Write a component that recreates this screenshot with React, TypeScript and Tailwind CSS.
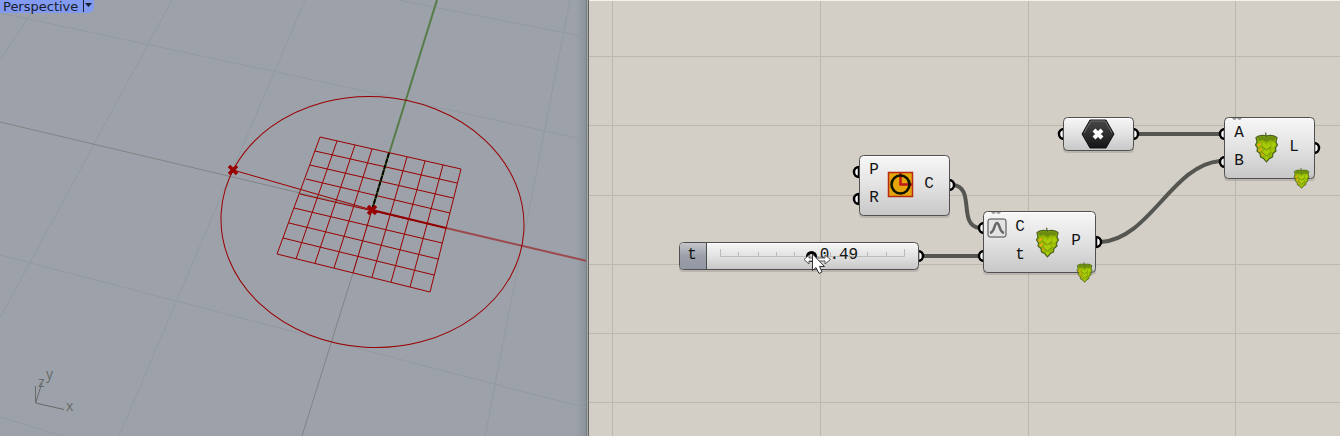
import { useState } from "react";
import type { ReactNode } from "react";

type Pt = [number, number];

const topEdge: Pt[] = [[320, 137], [337, 141], [355, 145], [372, 149], [389, 153], [407, 157], [425, 161], [443, 165], [461, 169]];
const bottomEdge: Pt[] = [[277, 254], [296, 259], [315, 263], [334, 268], [353, 273], [372, 277], [391, 282], [410, 287], [430, 292]];
const leftEdge: Pt[] = [[320, 137], [315, 151], [310, 165], [306, 179], [300, 194], [294, 208], [289, 223], [283, 238], [277, 254]];
const rightEdge: Pt[] = [[461, 169], [457, 183], [453, 198], [450, 213], [446, 228], [442, 243], [438, 259], [434, 275], [430, 292]];

const worldLines = [
  [0, 13, 300, 77], [300, 77, 586, 140], [0, 60, 40, 0], [172, 0, 0, 318], [305, 0, 119, 436],
  [398, 0, 586, 37], [570, 0, 485, 436], [0, 255, 586, 408], [0, 417, 63, 436],
];

function Cross({ x, y }: { x: number; y: number }) {
  return <path d={`M${x - 4} ${y - 4}l8 8M${x + 4} ${y - 4}l-8 8`} stroke="#990000" strokeWidth="3.5" />;
}

function Viewport() {
  return (
    <section aria-label="Perspective viewport" className="relative w-[589px] shrink-0 overflow-hidden bg-[#9da1aa]">
      <svg className="block" width="589" height="436" viewBox="0 0 589 436" fill="none">
        <defs>
          <linearGradient id="edge">
            <stop offset="0" stopColor="#8a929a" stopOpacity="0" />
            <stop offset="1" stopColor="#87919a" />
          </linearGradient>
        </defs>
        <rect x="576" width="11" height="436" fill="url(#edge)" />
        {worldLines.map(([a, b, c, d]) => (
          <line key={`${a}-${b}-${c}`} x1={a} y1={b} x2={c} y2={d} stroke="#939aa1" />
        ))}
        <path d="M0 122L372 210L353 273L302 436" stroke="#7f8584" />
        <path d="M437 0L389 154" stroke="#567c48" strokeWidth="2" />
        <path d="M446 228L587 261" stroke="#9b4a4d" strokeWidth="2" />
        <g stroke="#990000">
          {topEdge.map(([x, y], i) => (
            <line key={`v${i}`} x1={x} y1={y} x2={bottomEdge[i][0]} y2={bottomEdge[i][1]} />
          ))}
          {leftEdge.map(([x, y], i) => (
            <line key={`h${i}`} x1={x} y1={y} x2={rightEdge[i][0]} y2={rightEdge[i][1]} />
          ))}
          <ellipse cx="372.5" cy="222" rx="151.6" ry="125.4" transform="rotate(3.5 372.5 222)" />
          <path d="M233 170L372 210" />
        </g>
        <path d="M372 210L446 228" stroke="#900000" strokeWidth="2" />
        <path d="M389 153L372 210" stroke="#365a0f" strokeWidth="2" />
        <path d="M389 153L372 210" stroke="#000" strokeWidth="1.8" strokeDasharray="5 1" />
        <Cross x={233} y={170} />
        <Cross x={372} y={210} />
        <path d="M35.5 386V403L64 409.500M35.5 403L42 383" stroke="#666b69" />
        <g fill="#666b69" fontFamily="Open Sans, sans-serif" fontSize="14">
          <text x="38" y="387">z</text>
          <text x="46" y="379">y</text>
          <text x="66" y="411">x</text>
        </g>
        <rect x="586" width="1" height="436" fill="#777f82" />
        <rect x="587" width="1" height="436" fill="#a9aaa6" />
        <rect x="588" width="1" height="436" fill="#62635e" />
      </svg>
      <button className="absolute left-0 top-0 flex h-[13px] items-center rounded-br-md bg-[#829bf0] pl-[3px] pr-0.5 text-[#17202f]">
        <span className="w-20 whitespace-nowrap text-left font-['DejaVu_Sans',sans-serif] text-[13px] leading-[9px]">Perspective</span>
        <svg width="9" height="13" viewBox="0 0 9 13"><path d="M.5 0V12" stroke="#17202f" /><path d="M2 3H9L5.500 7Z" fill="#17202f" /></svg>
      </button>
    </section>
  );
}

function Hop({ x, y, size }: { x: number; y: number; size: number }) {
  return (
    <svg x={x} y={y} width={size * 0.78} height={size} viewBox="0 0 25 32">
      <path d="M11.500 1.500L12.500 6M12.500 5C9 4 5 4.500 2 6.500L3 11L1.500 14L3.500 17L3 20L6 22.500L6.500 26L9.500 27.500L12.500 31L15.500 27.500L18.500 26L19 22.500L22 20L21.500 17L23.500 14L22 11L23 6.500C20 4.500 16 4 12.500 5Z" fill="#92b600" stroke="#4b6120" strokeWidth="1.200" strokeLinejoin="round" />
      <path d="M3 7C6 5 10 5 12.500 6C15 5 19 5 22 7L20 10L16.500 9L12.500 11L8.500 9L5 10Z" fill="#6c8d12" />
      <path d="M9 11L12.500 14L16 11L16.500 16L12.500 19L8.500 16ZM17 12L20 11L22 14L18 18ZM9 20L12.500 17.500L16.500 20L15 24L12.500 26L10 24ZM17 19L20.500 18L18 22ZM10.500 27L12.500 25.500L14.500 27L12.500 29.500Z" fill="#a8cb0a" />
      <path d="M3 14L7 11.500L7.500 13.500L4 16ZM4 19.500L7.500 16.500L8 18.500L5.500 21ZM7 23L9.500 21L10 23L8.500 25Z" fill="#eaa81c" />
      <path d="M12.500 6V11M8 15.500L12.500 19L17 15.500M7.500 21L12.500 25L17.500 21" fill="none" stroke="#6e900c" />
    </svg>
  );
}

function Port({ x, y, out = false }: { x: number; y: number; out?: boolean }) {
  return <path d={out ? `M${x} ${y - 5}a5 5 0 0 1 0 10z` : `M${x} ${y - 5}a5 5 0 0 0 0 10z`} fill="#fff" stroke="#000" strokeWidth="2.500" />;
}

function Body({ x, y, w, h }: { x: number; y: number; w: number; h: number }) {
  return (
    <g>
      <rect x={x} y={y + 2} width={w} height={h} rx="4" fill="#000" opacity=".12" />
      <rect x={x + 0.5} y={y + 0.5} width={w - 1} height={h - 1} rx="4" fill="url(#node)" stroke="#505050" />
      <path d={`M${x + 4} ${y + 1.5}H${x + w - 4}`} stroke="#fff" />
    </g>
  );
}

function Label({ x, y, children }: { x: number; y: number; children: ReactNode }) {
  return <text x={x} y={y} textAnchor="middle">{children}</text>;
}

function Canvas() {
  const [value, setValue] = useState(0.49);
  return (
    <main className="relative min-w-0 flex-1 overflow-hidden bg-[#d3cec6]">
      <svg className="block" width="751" height="436" viewBox="589 0 751 436" fill="none">
        <defs>
          <linearGradient id="node" x2="0" y2="1">
            <stop offset="0" stopColor="#f7f7f7" />
            <stop offset=".5" stopColor="#e2e2e2" />
            <stop offset="1" stopColor="#c7c7c7" />
          </linearGradient>
          <linearGradient id="name" x2="0" y2="1">
            <stop offset="0" stopColor="#c5c6cb" />
            <stop offset=".5" stopColor="#9b9fa9" />
            <stop offset="1" stopColor="#9397a3" />
          </linearGradient>
          <linearGradient id="hex" x2="0" y2="1">
            <stop offset="0" stopColor="#484848" />
            <stop offset="1" stopColor="#151515" />
          </linearGradient>
        </defs>
        <path d="M589 56.500H1340M589 125.500H1340M589 195.500H1340M589 264.500H1340M589 333.500H1340M589 402.500H1340M612.500 0V436M820.500 0V436M1028.500 0V436M1235.500 0V436" stroke="#bbb8b0" />
        <path d="M589 .5H1340" stroke="#f2f1ee" />
        <g stroke="#555651" strokeWidth="4">
          <path d="M1138 134H1220M923 256H979M953 185C976 187 957 226 980 228M1101 242C1150 239 1172 165 1220 161" />
        </g>
        <Port x={859} y={172} /><Port x={859} y={199} /><Port x={949} y={185} out />
        <Port x={984} y={228} /><Port x={984} y={256} /><Port x={1096} y={242} out />
        <Port x={1064} y={134} /><Port x={1133} y={134} out />
        <Port x={1225} y={134} /><Port x={1225} y={162} /><Port x={1314} y={148} out />
        <Port x={918} y={256} out />
        <Body x={859} y={155} w={91} h={61} />
        <Body x={983} y={211} w={113} h={62} />
        <Body x={1063} y={117} w={71} h={34} />
        <Body x={1224} y={117} w={91} h={62} />
        <Body x={679} y={242} w={240} h={28} />
        <path d="M707 243H683Q680 243 680 246V266Q680 269 683 269H707Z" fill="url(#name)" />
        <path d="M706.500 243V269" stroke="#4d4f4d" />
        <path d="M720.500 249V256.500H904.500V249M738.500 252V256M758.500 252V256M776.500 252V256M794.500 252V256M830.500 252V256M849.500 252V256M867.500 252V256M886.500 252V256" stroke="#bcbcbc" />
        <g fill="#151515" fontFamily="Liberation Mono, monospace" fontSize="16">
          <Label x={874} y={174}>P</Label><Label x={874} y={202}>R</Label><Label x={929} y={188}>C</Label>
          <Label x={1020} y={231}>C</Label><Label x={1020} y={259}>t</Label><Label x={1076} y={245}>P</Label>
          <Label x={1239} y={137}>A</Label><Label x={1239} y={165}>B</Label><Label x={1294} y={151}>L</Label>
          <Label x={692} y={259}>t</Label><Label x={839} y={259}>{value.toFixed(2)}</Label>
        </g>
        <rect x="888.500" y="172.500" width="24" height="24" fill="#e5a50b" stroke="#b82a14" strokeWidth="1.500" />
        <path d="M900.500 173V184.500H912" stroke="#c01818" strokeWidth="2.500" />
        <circle cx="900.500" cy="184.500" r="9" stroke="#111600" strokeWidth="2.600" />
        <rect x="988" y="219" width="18" height="18" rx="2" fill="#e3e3e3" stroke="#444" />
        <path d="M990 233C995 232 994 223 997 223S999 232 1004 233" stroke="#666" strokeWidth="2.500" />
        <path d="M1090 120H1106L1114 134L1106 148H1090L1082 134Z" fill="url(#hex)" stroke="#111" />
        <path d="M1084 133L1091 121H1105L1112 133" stroke="#6a6a6a" />
        <path d="M1094 130L1102 138M1102 130L1094 138" stroke="#fff" strokeWidth="4" />
        <path d="M991 212Q993.500 216 996 212Q998.500 216 1001 212ZM1232 118Q1234.500 122 1237 118Q1239.500 122 1242 118Z" fill="#999" />
        <Hop x={1035} y={226} size={32} /><Hop x={1076} y={261} size={22} />
        <Hop x={1254} y={131} size={32} /><Hop x={1293} y={167} size={22} />
      </svg>
      <input
        type="range"
        aria-label="t"
        min={0}
        max={1}
        step={0.01}
        value={value}
        onChange={(event) => setValue(Number(event.target.value))}
        className="absolute left-[127px] top-[250px] m-0 h-3 w-[194px] cursor-pointer appearance-none bg-transparent [&::-webkit-slider-thumb]:h-[11px] [&::-webkit-slider-thumb]:w-[11px] [&::-webkit-slider-thumb]:appearance-none [&::-webkit-slider-thumb]:rounded-full [&::-webkit-slider-thumb]:border-[3px] [&::-webkit-slider-thumb]:border-solid [&::-webkit-slider-thumb]:border-black [&::-webkit-slider-thumb]:bg-transparent"
      />
      <svg aria-hidden="true" className="pointer-events-none absolute left-[214px] top-[252px]" width="30" height="24" viewBox="803 252 30 24" fill="none">
        <path d="M804 259.500L809 255V258H825V255L830.500 259.500L825 264V261H809V264Z" fill="#fff" stroke="#555" />
        <path d="M812.500 254V270.500L816 267.500L819 273.500L822 272L819.500 266.500H824.500Z" fill="#fff" stroke="#333" />
      </svg>
    </main>
  );
}

export default function App() {
  return <div className="flex w-full"><Viewport /><Canvas /></div>;
}
